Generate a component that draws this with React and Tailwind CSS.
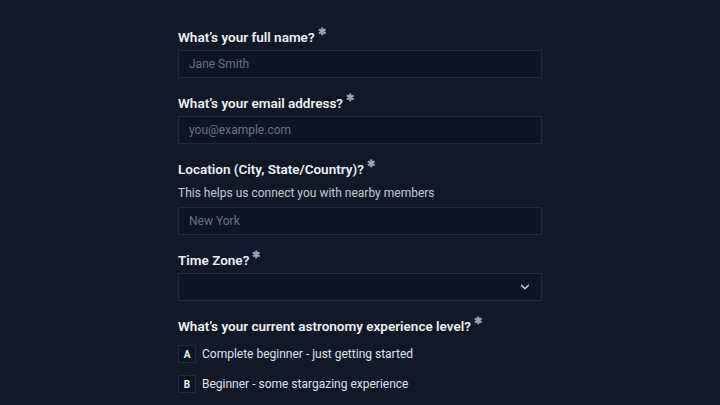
import { ChevronDown } from "lucide-react";

const font = { fontFamily: "Roboto, 'Noto Sans', sans-serif" };

function Label({ children }) {
  return (
    <label className="flex items-start pt-[1px] text-[13.5px] font-semibold leading-[19px] text-[#eef1f6]">
      {children}
      <span className="ml-[3px] -mt-[1px] text-[10px] leading-none text-[#9aa3b2]">✱</span>
    </label>
  );
}

function TextField({ label, hint, placeholder }) {
  return (
    <div className="flex flex-col">
      <Label>{label}</Label>
      {hint && (
        <p className="mt-[4px] mb-[1px] text-[12px] leading-5 text-[#c4cad4]">{hint}</p>
      )}
      <input
        className="mt-[3px] h-7 w-full border border-[#1f2a40] bg-[#0e1422] px-[10px] text-[12px] text-[#e5e7eb] outline-none placeholder:text-[#6b7383]"
        placeholder={placeholder}
      />
    </div>
  );
}

const levels = [
  ["A", "Complete beginner - just getting started"],
  ["B", "Beginner - some stargazing experience"],
  ["C", "Intermediate - own a telescope"],
];

export default function App() {
  return (
    <div className="min-h-screen h-[405px] overflow-hidden bg-[#121828]" style={font}>
      <div className="mx-auto flex w-[364px] flex-col gap-[15px] pt-[27px]">
        <TextField label="What’s your full name?" placeholder="Jane Smith" />
        <TextField label="What’s your email address?" placeholder="you@example.com" />
        <TextField
          label="Location (City, State/Country)?"
          hint="This helps us connect you with nearby members"
          placeholder="New York"
        />
        <div className="flex flex-col">
          <Label>Time Zone?</Label>
          <div className="mt-[3px] flex h-7 items-center justify-end border border-[#1f2a40] bg-[#0e1422] pr-[9px]">
            <ChevronDown size={14} strokeWidth={2.2} className="text-[#d4d8df]" />
          </div>
        </div>
        <div className="flex flex-col">
          <Label>What’s your current astronomy experience level?</Label>
          <div className="mt-[9px] flex flex-col gap-[12px]">
            {levels.map(([k, t]) => (
              <div key={k} className="flex items-center gap-[6px]">
                <span className="flex h-[18px] w-[18px] items-center justify-center border border-[#1f2a40] bg-[#0e1422] text-[10px] font-bold text-[#eef1f6]">
                  {k}
                </span>
                <span className="text-[12px] leading-[18px] text-[#dfe3ea]">{t}</span>
              </div>
            ))}
          </div>
        </div>
      </div>
    </div>
  );
}
